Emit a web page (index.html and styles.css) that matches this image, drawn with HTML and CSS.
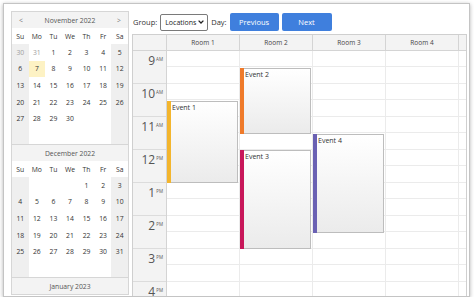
FILE: index.html
```html
<!DOCTYPE html>
<html>
<head>
<meta charset="utf-8">
<link rel="stylesheet" href="styles.css">
</head>
<body>
<div class="card">
  <div class="nav">
    <div class="mtitle first"><span class="arrow">&lt;</span><span>November 2022</span><span class="arrow">&gt;</span></div>
    <div class="dnames"><span>Su</span><span>Mo</span><span>Tu</span><span>We</span><span>Th</span><span>Fr</span><span>Sa</span></div>
    <div class="days">
      <span class="other">30</span><span class="other">31</span><span>1</span><span>2</span><span>3</span><span>4</span><span>5</span>
      <span>6</span><span class="today">7</span><span>8</span><span>9</span><span>10</span><span>11</span><span>12</span>
      <span>13</span><span>14</span><span>15</span><span>16</span><span>17</span><span>18</span><span>19</span>
      <span>20</span><span>21</span><span>22</span><span>23</span><span>24</span><span>25</span><span>26</span>
      <span>27</span><span>28</span><span>29</span><span>30</span><span></span><span></span><span></span>
      <span></span><span></span><span></span><span></span><span></span><span></span><span></span>
    </div>
    <div class="mtitle"><span>December 2022</span></div>
    <div class="dnames"><span>Su</span><span>Mo</span><span>Tu</span><span>We</span><span>Th</span><span>Fr</span><span>Sa</span></div>
    <div class="days">
      <span></span><span></span><span></span><span></span><span>1</span><span>2</span><span>3</span>
      <span>4</span><span>5</span><span>6</span><span>7</span><span>8</span><span>9</span><span>10</span>
      <span>11</span><span>12</span><span>13</span><span>14</span><span>15</span><span>16</span><span>17</span>
      <span>18</span><span>19</span><span>20</span><span>21</span><span>22</span><span>23</span><span>24</span>
      <span>25</span><span>26</span><span>27</span><span>28</span><span>29</span><span>30</span><span>31</span>
      <span></span><span></span><span></span><span></span><span></span><span></span><span></span>
    </div>
    <div class="mtitle"><span>January 2023</span></div>
  </div>
  <div class="main">
    <div class="toolbar">
      <span class="label">Group:</span>
      <div class="select"><span>Locations</span><svg width="6" height="4" viewBox="0 0 6 4"><polyline points="0.6,0.6 3,3 5.4,0.6" fill="none" stroke="#222" stroke-width="1.3"/></svg></div>
      <span class="label">Day:</span>
      <button class="btn">Previous</button>
      <button class="btn next">Next</button>
    </div>
    <div class="sched">
      <div class="sched-head">
        <div class="corner"></div>
        <div class="room">Room 1</div>
        <div class="room">Room 2</div>
        <div class="room">Room 3</div>
        <div class="room">Room 4</div>
        <div class="fill"></div>
      </div>
      <div class="sched-body">
        <div class="hours">
          <div class="hour"><b>9</b><i>AM</i></div>
          <div class="hour"><b>10</b><i>AM</i></div>
          <div class="hour"><b>11</b><i>AM</i></div>
          <div class="hour"><b>12</b><i>PM</i></div>
          <div class="hour"><b>1</b><i>PM</i></div>
          <div class="hour"><b>2</b><i>PM</i></div>
          <div class="hour"><b>3</b><i>PM</i></div>
          <div class="hour"><b>4</b><i>PM</i></div>
        </div>
        <div class="col">
          <div class="cell"></div><div class="cell"></div><div class="cell"></div><div class="cell"></div>
          <div class="cell"></div><div class="cell"></div><div class="cell"></div><div class="cell"></div>
          <div class="cell"></div><div class="cell"></div><div class="cell"></div><div class="cell"></div>
          <div class="cell"></div><div class="cell"></div><div class="cell"></div><div class="cell"></div>
          <div class="ev" style="top:49.5px;height:82.5px"><div class="bar c1"></div>Event 1</div>
        </div>
        <div class="col">
          <div class="cell"></div><div class="cell"></div><div class="cell"></div><div class="cell"></div>
          <div class="cell"></div><div class="cell"></div><div class="cell"></div><div class="cell"></div>
          <div class="cell"></div><div class="cell"></div><div class="cell"></div><div class="cell"></div>
          <div class="cell"></div><div class="cell"></div><div class="cell"></div><div class="cell"></div>
          <div class="ev" style="top:16.5px;height:66px"><div class="bar c2"></div>Event 2</div>
          <div class="ev" style="top:99px;height:99px"><div class="bar c3"></div>Event 3</div>
        </div>
        <div class="col">
          <div class="cell"></div><div class="cell"></div><div class="cell"></div><div class="cell"></div>
          <div class="cell"></div><div class="cell"></div><div class="cell"></div><div class="cell"></div>
          <div class="cell"></div><div class="cell"></div><div class="cell"></div><div class="cell"></div>
          <div class="cell"></div><div class="cell"></div><div class="cell"></div><div class="cell"></div>
          <div class="ev" style="top:82.5px;height:99px"><div class="bar c4"></div>Event 4</div>
        </div>
        <div class="col">
          <div class="cell"></div><div class="cell"></div><div class="cell"></div><div class="cell"></div>
          <div class="cell"></div><div class="cell"></div><div class="cell"></div><div class="cell"></div>
          <div class="cell"></div><div class="cell"></div><div class="cell"></div><div class="cell"></div>
          <div class="cell"></div><div class="cell"></div><div class="cell"></div><div class="cell"></div>
        </div>
        <div class="col fillcol">
          <div class="cell"></div><div class="cell"></div><div class="cell"></div><div class="cell"></div>
          <div class="cell"></div><div class="cell"></div><div class="cell"></div><div class="cell"></div>
          <div class="cell"></div><div class="cell"></div><div class="cell"></div><div class="cell"></div>
          <div class="cell"></div><div class="cell"></div><div class="cell"></div><div class="cell"></div>
        </div>
      </div>
    </div>
  </div>
</div>
</body>
</html>
```

FILE: styles.css
```css
* { box-sizing: border-box; }
body {
  margin: 0;
  background: #fff;
  font-family: "Open Sans", "Noto Sans", sans-serif;
  color: #333;
}
.card {
  margin: 3px 0 0 3px;
  width: 467px;
  height: 294px;
  border: 1px solid #c4c4c4;
  box-shadow: 0 1px 4px rgba(0, 0, 0, 0.3);
  display: flex;
  gap: 3px;
  padding: 7px 2px 0 7px;
  overflow: hidden;
  background: #fff;
}

/* navigator */
.nav {
  width: 118px;
  height: 284px;
  flex: none;
  border: 1px solid #d6d6d6;
  font-size: 6.8px;
  color: #333;
}
.mtitle {
  height: 17px;
  border-top: 1px solid #d6d6d6;
  background: #f3f3f3;
  color: #555;
  display: flex;
  align-items: center;
  justify-content: center;
}
.mtitle.first {
  height: 16px;
  border-top: none;
  justify-content: space-between;
  padding: 0 7px 0 7px;
}
.arrow { color: #777; }
.dnames {
  height: 16px;
  display: grid;
  grid-template-columns: repeat(7, 1fr);
  align-items: center;
  text-align: center;
}
.days {
  height: 100px;
  display: grid;
  grid-template-columns: repeat(7, 1fr);
  grid-template-rows: repeat(6, 1fr);
}
.days span {
  display: flex;
  align-items: center;
  justify-content: center;
}
.days span:nth-child(7n+1),
.days span:nth-child(7n) { background: #efefef; }
.days .other { color: #a0a0a0; }
.days .today { background: #fdf2c4; }

/* main */
.main {
  flex: 1;
  min-width: 0;
  display: flex;
  flex-direction: column;
  gap: 3px;
  padding-top: 2px;
}
.toolbar {
  height: 18px;
  flex: none;
  display: flex;
  align-items: center;
  gap: 3px;
  padding-left: 1px;
  font-size: 7.5px;
}
.label { color: #333; }
.select {
  width: 48px;
  height: 17px;
  border: 1px solid #7a7a7a;
  border-radius: 2px;
  background: #fff;
  display: flex;
  align-items: center;
  justify-content: space-between;
  padding: 0 3px 0 4px;
  color: #222;
  font-size: 7px;
}
.btn {
  width: 49px;
  height: 18px;
  border: none;
  border-radius: 2px;
  background: #3f7fdd;
  color: #fff;
  font-family: inherit;
  font-size: 7.5px;
  padding: 0;
}
.btn.next { width: 50px; }

/* scheduler */
.sched {
  flex: 1;
  min-height: 0;
  border: 1px solid #cfcfcf;
  border-bottom: none;
  overflow: hidden;
  display: flex;
  flex-direction: column;
}
.sched-head {
  height: 16px;
  flex: none;
  display: flex;
  background: #f3f3f3;
  border-bottom: 1px solid #d4d4d4;
}
.corner {
  width: 34px;
  flex: none;
  border-right: 1px solid #d4d4d4;
}
.room {
  width: 73px;
  flex: none;
  border-right: 1px solid #d4d4d4;
  display: flex;
  align-items: center;
  justify-content: center;
  font-size: 6.5px;
  color: #444;
}
.fill { flex: 1; }
.sched-body {
  flex: 1;
  min-height: 0;
  display: flex;
  overflow: hidden;
}
.hours {
  width: 34px;
  flex: none;
  background: #f3f3f3;
  border-right: 1px solid #d4d4d4;
}
.hour {
  height: 33px;
  border-bottom: 1px solid #dcdcdc;
  display: flex;
  justify-content: flex-end;
  align-items: flex-start;
  padding: 4px 3px 0 0;
  color: #555;
}
.hour b {
  font-weight: normal;
  font-size: 12px;
  line-height: 12px;
}
.hour i {
  font-style: normal;
  font-size: 4.5px;
  line-height: 6px;
  margin-left: 1px;
  margin-top: 1px;
}
.col {
  width: 73px;
  flex: none;
  position: relative;
  border-right: 1px solid #ebebeb;
}
.col.fillcol { flex: 1; width: auto; border-right: none; }
.cell {
  height: 16px;
  border-bottom: 1px solid #ebebeb;
}
.cell:nth-child(2n) { height: 17px; }
.ev {
  position: absolute;
  left: 0;
  width: 71px;
  border: 1px solid #bdbdbd;
  background: linear-gradient(#ffffff, #ebebeb);
  font-size: 7px;
  line-height: 9px;
  padding: 1px 0 0 4px;
  color: #333;
}
.bar {
  position: absolute;
  left: -1px;
  top: -1px;
  bottom: -1px;
  width: 4px;
}
.c1 { background: #f3b52d; }
.c2 { background: #ef7a2a; }
.c3 { background: #c8175a; }
.c4 { background: #6a61b3; }
```
